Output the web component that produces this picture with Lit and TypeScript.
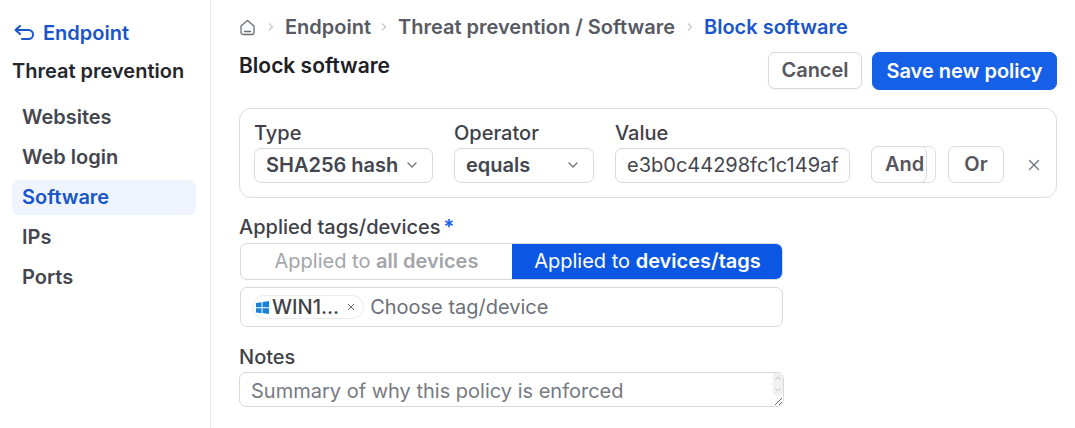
import {html, css, LitElement} from 'lit';
import {customElement} from 'lit/decorators.js';

const chevron = html`<svg class="chev" width="12" height="12" viewBox="0 0 12 12"><path d="M2 4l4 4 4-4" fill="none" stroke="currentColor" stroke-width="1.2" stroke-linecap="round" stroke-linejoin="round"/></svg>`;
const sep = html`<svg class="sep" width="7" height="10" viewBox="0 0 7 10"><path d="M2 1.5L5.5 5 2 8.5" fill="none" stroke="currentColor" stroke-width="1.2"/></svg>`;

@customElement('app-root')
export class AppRoot extends LitElement {
  static styles = css`
    :host {
      display: flex;
      width: 1075px;
      height: 428px;
      overflow: hidden;
      background: #fff;
      color: #44464f;
      font-family: Inter, sans-serif;
      font-size: 20px;
      font-weight: 500;
      line-height: 24px;
    }
    * {
      box-sizing: border-box;
    }
    .side {
      width: 211px;
      flex: none;
      border-right: 1px solid #e4e5e8;
      padding: 21px 14px 0 12px;
    }
    .back {
      display: flex;
      align-items: center;
      gap: 9px;
      padding-left: 2px;
      color: #1a56c9;
      font-weight: 600;
    }
    .side h2 {
      margin: 14px 0 17px;
      font-size: 20px;
      line-height: 24px;
      font-weight: 600;
      color: #24262c;
    }
    .nav {
      display: flex;
      flex-direction: column;
    }
    .nav a {
      height: 35px;
      margin-bottom: 5px;
      padding-left: 10px;
      border-radius: 6px;
      font-weight: 600;
      line-height: 35px;
    }
    .nav a.on {
      background: #eff4fe;
      color: #1a56c9;
    }
    .main {
      flex: 1;
      padding: 15px 18px 0 28px;
    }
    .crumbs {
      display: flex;
      align-items: center;
      height: 24px;
      font-weight: 600;
      color: #575a63;
    }
    .crumbs .sep {
      margin: 0 11px;
      color: #c5c7cc;
    }
    .crumbs span:nth-of-type(1) {
      margin-right: -2px;
    }
    .crumbs .cur {
      color: #1a56c9;
    }
    .head {
      display: flex;
      justify-content: space-between;
      align-items: flex-start;
      height: 67px;
      margin-top: 2px;
    }
    .head h1 {
      margin: 12px 0 0;
      font-size: 21px;
      line-height: 26px;
      font-weight: 600;
      color: #1e2025;
    }
    .actions {
      display: flex;
      gap: 10px;
      align-items: flex-start;
      margin-top: 11px;
    }
    button {
      font: inherit;
      font-weight: 600;
      background: #fff;
      color: #55575e;
      border: 1px solid #d8d9dc;
      border-radius: 7px;
      padding: 0 0 1px;
    }
    .cancel {
      width: 94px;
      height: 37px;
      box-shadow: 0 1px 2px rgba(0, 0, 0, .06);
    }
    .save {
      width: 185px;
      height: 38px;
      background: #1660e8;
      border-color: #1660e8;
      color: #fff;
    }
    .card {
      display: flex;
      align-items: flex-end;
      height: 90px;
      border: 1px solid #dcdde0;
      border-radius: 12px;
      padding: 0 0 14px 14px;
    }
    .field {
      display: flex;
      flex-direction: column;
    }
    label, .lbl {
      font-weight: 500;
      font-size: 20px;
      line-height: 24px;
      color: #3f4148;
    }
    .field .lbl {
      margin-bottom: 3px;
    }
    .ctl {
      display: flex;
      align-items: center;
      justify-content: space-between;
      height: 35px;
      border: 1px solid #d8d9dc;
      border-radius: 7px;
      padding: 0 14px 1px 11px;
      font-weight: 600;
      color: #44464f;
    }
    .chev {
      color: #6b6e76;
      flex: none;
    }
    .type {
      width: 179px;
      margin-right: 21px;
    }
    .op {
      width: 140px;
      margin-right: 21px;
    }
    .val {
      width: 235px;
      margin-right: 21px;
    }
    .val .ctl {
      font-weight: 400;
      padding: 0 8px 1px 11px;
      overflow: hidden;
      white-space: nowrap;
    }
    .and {
      position: relative;
      width: 65px;
      height: 37px;
      margin-right: 12px;
    }
    .and::before {
      content: '';
      position: absolute;
      inset: 0;
      border: 1px solid #dedfe2;
      border-radius: 7px;
    }
    .and button {
      position: absolute;
      left: 0;
      top: 0;
      width: 56px;
      height: 37px;
      padding-left: 13px;
      text-align: left;
      white-space: nowrap;
    }
    .or {
      width: 56px;
      height: 37px;
      margin-right: 23px;
    }
    .x {
      align-self: flex-end;
      margin-bottom: 11px;
      color: #70737a;
    }
    .sec {
      margin-top: 17px;
    }
    .req {
      margin-left: 3px;
      color: #1660e8;
      font-weight: 600;
    }
    .toggle {
      display: flex;
      width: 543px;
      height: 37px;
      margin: 4px 0 7px 1px;
      border: 1px solid #d8d9dc;
      border-radius: 7px;
      overflow: hidden;
    }
    .toggle span {
      flex: 1;
      text-align: center;
      line-height: 34px;
      font-weight: 400;
      color: #a3a5aa;
    }
    .toggle b {
      font-weight: 600;
    }
    .toggle .on {
      flex: none;
      width: 271px;
      margin: -1px -1px -1px 0;
      background: #0b57e3;
      color: #fff;
      line-height: 36px;
    }
    .tags {
      display: flex;
      align-items: center;
      width: 543px;
      height: 40px;
      margin-left: 1px;
      padding-left: 11px;
      border: 1px solid #d8d9dc;
      border-radius: 7px;
      font-weight: 400;
      color: #6d7078;
    }
    .chip {
      display: flex;
      align-items: center;
      height: 24px;
      padding: 0 8px 0 3px;
      margin-right: 6px;
      border: 1px solid #e9eaec;
      border-radius: 12px;
      font-weight: 500;
      color: #3f4148;
    }
    .chip svg:first-child {
      margin-right: 3px;
    }
    .chip .cx {
      margin-left: 8px;
      color: #6b6e76;
    }
    .notes {
      margin-top: 18px;
    }
    .box {
      position: relative;
      width: 545px;
      margin-top: 3px;
    }
    textarea {
      display: block;
      width: 545px;
      height: 35px;
      padding: 6px 11px 4px;
      border: 1px solid #d8d9dc;
      border-radius: 7px;
      font: inherit;
      font-weight: 400;
      overflow: hidden;
      outline: none;
      color: #44464f;
    }
    textarea::placeholder {
      color: #777a82;
      opacity: 1;
    }
    .bar {
      position: absolute;
      top: 1px;
      right: 1px;
      bottom: 12px;
      width: 10px;
      display: flex;
      flex-direction: column;
      justify-content: space-between;
      align-items: center;
      padding: 2px 0;
      background: #f1f1f2;
      pointer-events: none;
      color: #c4c5c8;
      border-top-right-radius: 6px;
    }
  `;

  render() {
    return html`
      <aside class="side">
        <div class="back">
          <svg width="20" height="16" viewBox="0 0 20 16"><path d="M6 1L1.500 5 6 9M2 5h12.500a4.500 4.500 0 0 1 0 9H8" fill="none" stroke="#1a56c9" stroke-width="2" stroke-linecap="round" stroke-linejoin="round"/></svg>
          Endpoint
        </div>
        <h2>Threat prevention</h2>
        <nav class="nav">
          <a>Websites</a>
          <a>Web login</a>
          <a class="on">Software</a>
          <a>IPs</a>
          <a>Ports</a>
        </nav>
      </aside>
      <main class="main">
        <div class="crumbs">
          <svg width="17" height="17" viewBox="0 0 17 17"><path d="M2 7l6.500-5.500L15 7v6.500a2 2 0 0 1-2 2H4a2 2 0 0 1-2-2z" fill="none" stroke="#6b6e76" stroke-width="1.300" stroke-linejoin="round"/><path d="M5.500 12.500h6" stroke="#6b6e76" stroke-width="1.300" stroke-linecap="round"/></svg>
          ${sep}
          <span>Endpoint</span>
          ${sep}
          <span>Threat prevention / Software</span>
          ${sep}
          <span class="cur">Block software</span>
        </div>
        <div class="head">
          <h1>Block software</h1>
          <div class="actions">
            <button class="cancel">Cancel</button>
            <button class="save">Save new policy</button>
          </div>
        </div>
        <div class="card">
          <div class="field type">
            <span class="lbl">Type</span>
            <div class="ctl">SHA256 hash ${chevron}</div>
          </div>
          <div class="field op">
            <span class="lbl">Operator</span>
            <div class="ctl">equals ${chevron}</div>
          </div>
          <div class="field val">
            <span class="lbl">Value</span>
            <div class="ctl">e3b0c44298fc1c149af</div>
          </div>
          <div class="and"><button>And</button></div>
          <button class="or">Or</button>
          <svg class="x" width="14" height="14" viewBox="0 0 14 14"><path d="M2.500 2.500l9 9M11.500 2.500l-9 9" stroke="currentColor" stroke-width="1.300" stroke-linecap="round"/></svg>
        </div>
        <div class="sec">
          <span class="lbl">Applied tags/devices<span class="req">*</span></span>
          <div class="toggle">
            <span>Applied to <b>all devices</b></span>
            <span class="on">Applied to <b>devices/tags</b></span>
          </div>
          <div class="tags">
            <div class="chip">
              <svg width="13" height="13" viewBox="0 0 13 13"><path d="M0 2l5.500-.8v5H0zM6.500 1l6.500-1v6.200H6.500zM0 7.200h5.500v5L0 11.400zM6.500 7.200H13V13l-6.500-1z" fill="#1682d8"/></svg>
              WIN1...
              <svg class="cx" width="8" height="8" viewBox="0 0 8 8"><path d="M1 1l6 6M7 1L1 7" stroke="currentColor" stroke-width="1"/></svg>
            </div>
            Choose tag/device
          </div>
        </div>
        <div class="notes">
          <label>Notes</label>
          <div class="box">
            <textarea rows="1" placeholder="Summary of why this policy is enforced"></textarea>
            <div class="bar">
              <svg width="8" height="6" viewBox="0 0 8 6"><path d="M1 5l3-3 3 3" fill="none" stroke="currentColor"/></svg>
              <svg width="8" height="6" viewBox="0 0 8 6"><path d="M1 1l3 3 3-3" fill="none" stroke="currentColor"/></svg>
            </div>
          </div>
        </div>
      </main>
    `;
  }
}
